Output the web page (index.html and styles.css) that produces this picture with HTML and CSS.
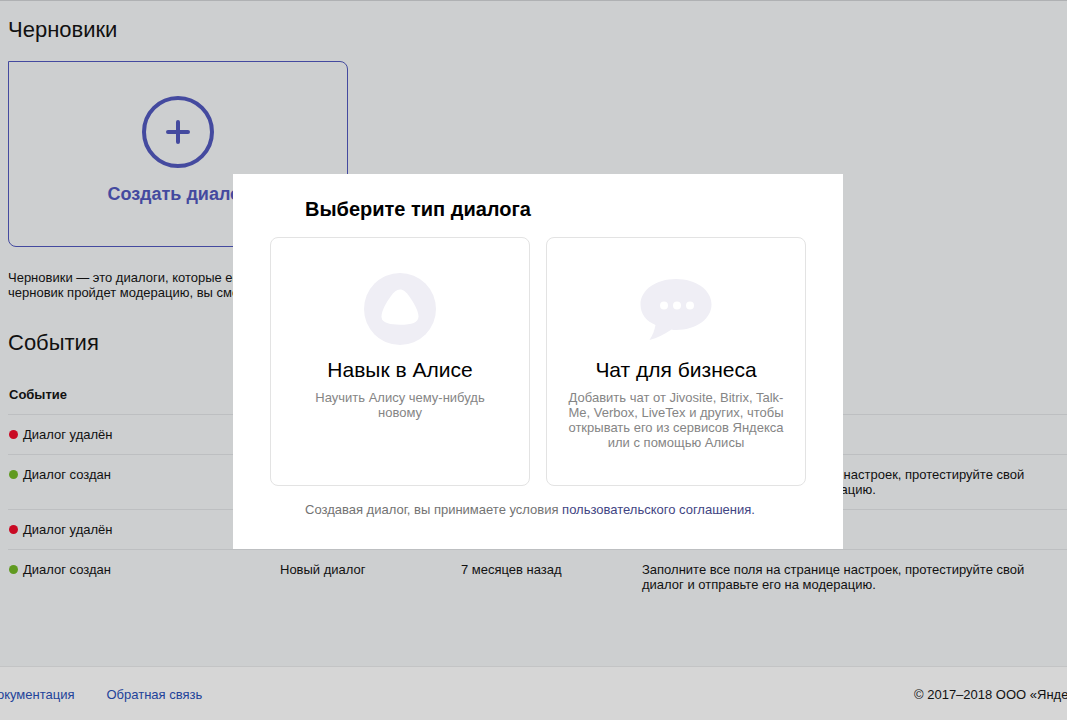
FILE: index.html
```html
<!DOCTYPE html>
<html lang="ru">
<head>
<meta charset="utf-8">
<title>Диалоги</title>
<link rel="stylesheet" href="styles.css">
</head>
<body>
<main class="content">
  <h2 class="heading">Черновики</h2>
  <button class="create" type="button">
    <svg class="create-icon" viewBox="0 0 72 72" aria-hidden="true">
      <circle cx="36" cy="36" r="34"/>
      <path d="M36 26v20M26 36h20"/>
    </svg>
    <span>Создать диалог</span>
  </button>
  <p class="intro">Черновики — это диалоги, которые ещё не опубликованы. Как только<br>черновик пройдет модерацию, вы сможете его опубликовать.</p>
  <h2 class="heading">События</h2>
  <table class="events">
    <thead>
      <tr><th class="col-event">Событие</th><th class="col-name">Диалог</th><th class="col-date">Дата</th><th>Комментарий</th></tr>
    </thead>
    <tbody>
      <tr><td><span class="dot dot-red"></span>Диалог удалён</td><td>Новый диалог</td><td>7 месяцев назад</td><td></td></tr>
      <tr><td><span class="dot dot-green"></span>Диалог создан</td><td>Новый диалог</td><td>7 месяцев назад</td><td>Заполните все поля на странице настроек, протестируйте свой диалог и отправьте его на модерацию.</td></tr>
      <tr><td><span class="dot dot-red"></span>Диалог удалён</td><td>Новый диалог</td><td>7 месяцев назад</td><td></td></tr>
      <tr><td><span class="dot dot-green"></span>Диалог создан</td><td>Новый диалог</td><td>7 месяцев назад</td><td>Заполните все поля на странице настроек, протестируйте свой диалог и отправьте его на модерацию.</td></tr>
    </tbody>
  </table>
</main>
<footer class="footer">
  <nav class="footer-nav">
    <a href="#docs">Документация</a>
    <a href="#feedback">Обратная связь</a>
  </nav>
  <span>© 2017–2018 ООО «Яндекс»</span>
</footer>
<div class="overlay">
  <section class="modal" role="dialog" aria-modal="true" aria-labelledby="modal-title">
    <h1 class="modal-title" id="modal-title">Выберите тип диалога</h1>
    <div class="types">
      <button class="type" type="button">
        <svg class="type-icon" viewBox="0 0 72 72" aria-hidden="true">
          <circle class="tint" cx="36" cy="36" r="36"/>
          <path class="hole" d="M36 16.500C39.500 16.500 42 19 45 23C49.500 29 54.500 38 54.500 43.500C54.500 49.500 48 51.800 36 51.800S17.500 49.500 17.500 43.500C17.500 38 22.500 29 27 23C30 19 32.500 16.500 36 16.500Z"/>
        </svg>
        <span class="type-name">Навык в Алисе</span>
        <span class="type-text">Научить Алису чему-нибудь<br>новому</span>
      </button>
      <button class="type" type="button">
        <svg class="type-icon" viewBox="0 0 72 72" aria-hidden="true">
          <path class="tint" d="M36 6C56 6 71.500 17 71.500 31.500S56 57 36 57C34.500 57 33 57 31.500 56.500C25 61 17 65 9.500 67C12.500 62.500 14.500 57.500 15.500 52C6 48 .500 40.500 .500 31.500C.500 17 16 6 36 6Z"/>
          <circle class="hole" cx="24" cy="32.500" r="4"/>
          <circle class="hole" cx="37" cy="32.500" r="4"/>
          <circle class="hole" cx="50" cy="32.500" r="4"/>
        </svg>
        <span class="type-name">Чат для бизнеса</span>
        <span class="type-text">Добавить чат от Jivosite, Bitrix, Talk-Me, Verbox, LiveTex и других, чтобы открывать его из сервисов Яндекса или с помощью Алисы</span>
      </button>
    </div>
    <p class="terms">Создавая диалог, вы принимаете условия <a href="#terms">пользовательского соглашения.</a></p>
  </section>
</div>
</body>
</html>
```
FILE: styles.css
```css
* { box-sizing: border-box; }

body {
  margin: 0;
  min-height: 100vh;
  display: flex;
  flex-direction: column;
  overflow: hidden;
  border-top: 1px solid #afb1b3;
  background: #cdcfd0;
  color: #111;
  font: 13px/15px "Liberation Sans", Arial, sans-serif;
}

a { text-decoration: none; }

button {
  font-family: inherit;
  cursor: pointer;
}

.content {
  flex: 1;
  padding: 16px 0 0 8px;
}

.heading {
  margin: 0 0 18px;
  font-size: 22px;
  line-height: 26px;
  font-weight: 400;
}

.create {
  display: flex;
  flex-direction: column;
  align-items: center;
  gap: 16px;
  width: 340px;
  padding: 34px 20px 42px;
  border: 1px solid #444a9f;
  border-radius: 0 8px 8px 8px;
  background: none;
  color: #444a9f;
  font-size: 18px;
  line-height: 20px;
  font-weight: 700;
}

.create-icon {
  width: 72px;
  height: 72px;
  fill: none;
  stroke: currentColor;
  stroke-width: 4;
  stroke-linecap: round;
}

.intro { margin: 23px 0 30px; }

.events {
  width: 100%;
  margin-top: 19px;
  border-collapse: collapse;
  table-layout: fixed;
}

.events th,
.events td {
  padding: 12px 10px 12px 1px;
  text-align: left;
  vertical-align: top;
}

.events td { border-top: 1px solid #bdbfc1; }

.col-event { width: 271px; }
.col-name,
.col-date { width: 181px; }

.dot {
  display: inline-block;
  width: 9px;
  height: 9px;
  margin-right: 5px;
  border-radius: 50%;
}

.dot-red { background: #c90a24; }
.dot-green { background: #609a20; }

.footer {
  display: flex;
  justify-content: space-between;
  margin: 0 -21px 0 -12px;
  padding: 20px 0 18px;
  border-top: 1px solid #c3c4c5;
  background: #d6d6d6;
  white-space: nowrap;
}

.footer-nav {
  display: flex;
  gap: 32px;
}

.footer a { color: #22439a; }

.overlay {
  position: fixed;
  inset: 0;
  display: flex;
  align-items: center;
  justify-content: center;
  padding: 3px 0 0 9px;
}

.modal {
  width: 610px;
  padding: 23px 37px 32px;
  background: #fff;
}

.modal-title {
  margin: 0 35px 16px;
  color: #000;
  font-size: 20px;
  line-height: 24px;
}

.types {
  display: grid;
  grid-template-columns: 1fr 1fr;
  gap: 16px;
}

.type {
  display: flex;
  flex-direction: column;
  align-items: center;
  padding: 35px 16px;
  border: 1px solid #e3e3e3;
  border-radius: 8px;
  background: #fff;
}

.type-icon {
  width: 72px;
  height: 72px;
  margin-bottom: 13px;
}

.tint { fill: #efeef5; }
.hole { fill: #fff; }

.type-name {
  margin-bottom: 8px;
  color: #000;
  font-size: 21px;
  line-height: 24px;
}

.type-text {
  color: #858585;
  font-size: 13px;
  line-height: 15px;
}

.terms {
  margin: 16px 35px 0;
  color: #737373;
}

.terms a { color: #3f4583; }
```
